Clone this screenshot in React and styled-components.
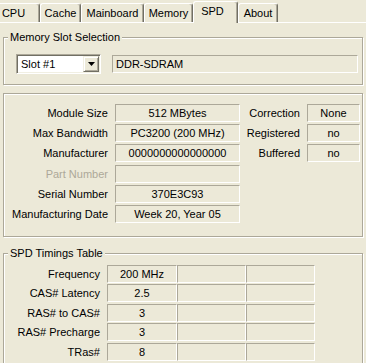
import React from "react";
import styled, { createGlobalStyle } from "styled-components";

const GlobalStyle = createGlobalStyle`
  html, body {
    margin: 0;
    padding: 0;
    background: #ece9d8;
  }
  body {
    font-family: "Liberation Sans", Arial, sans-serif;
    font-size: 11px;
    color: #000;
  }
`;

const Window = styled.div`
  width: 366px;
  height: 363px;
  overflow: hidden;
  background: #ece9d8;
`;

const TabStrip = styled.div`
  display: flex;
  align-items: flex-end;
  height: 22px;
  margin-left: -13px;
  position: relative;
  z-index: 1;
`;

const Tab = styled.div`
  box-sizing: border-box;
  width: ${(p) => p.$w}px;
  height: ${(p) => (p.$active ? 22 : 19)}px;
  margin-bottom: ${(p) => (p.$active ? -1 : 0)}px;
  padding-bottom: ${(p) => (p.$active ? 2 : 0)}px;
  padding-right: ${(p) => (p.$active ? 6 : 0)}px;
  border-left: 1px solid #fff;
  border-top: 1px solid #fff;
  border-right: 1px solid #716f64;
  box-shadow: inset -1px 0 0 #aca899;
  border-radius: 3px 3px 0 0;
  background: #ece9d8;
  display: flex;
  align-items: center;
  justify-content: center;
  line-height: 13px;
`;

const Panel = styled.div`
  border-top: 1px solid #fff;
  padding: 8px 3px 0 3px;
  display: flex;
  flex-direction: column;
`;

const GroupBox = styled.fieldset`
  margin: ${(p) => p.$mt || 0}px 0 0 0;
  padding: 0;
  min-width: 0;
  border: 1px solid #aca899;
  box-shadow: inset 1px 1px 0 #fff, 1px 1px 0 #fff;
`;

const Legend = styled.legend`
  margin-left: 4px;
  padding: 0 2px;
  line-height: 13px;
  background: #ece9d8;
`;

const SlotRow = styled.div`
  display: flex;
  align-items: center;
  gap: 11px;
  padding: 10px 4px 10px 12px;
`;

const Combo = styled.div`
  box-sizing: border-box;
  width: 85px;
  height: 20px;
  display: flex;
  align-items: center;
  justify-content: space-between;
  background: #fff;
  border: 1px solid;
  border-color: #aca899 #fff #fff #aca899;
  box-shadow: inset 1px 1px 0 #716f64, inset -1px -1px 0 #f1efe2;
  padding: 1px 1px 1px 4px;
`;

const DropButton = styled.div`
  box-sizing: border-box;
  width: 16px;
  height: 16px;
  display: flex;
  align-items: center;
  justify-content: center;
  background: #ece9d8;
  border: 1px solid;
  border-color: #f1efe2 #716f64 #716f64 #f1efe2;
  box-shadow: inset 1px 1px 0 #fff, inset -1px -1px 0 #aca899;
`;

const Field = styled.div`
  box-sizing: border-box;
  height: 18px;
  ${(p) => (p.$grow ? "flex: 1;" : "")}
  display: flex;
  align-items: center;
  justify-content: ${(p) => (p.$left ? "flex-start" : "center")};
  padding: 0 3px;
  border: 1px solid;
  border-color: #aca899 #fff #fff #aca899;
  white-space: nowrap;
  overflow: hidden;
`;

const InfoGrid = styled.div`
  display: grid;
  grid-template-columns: 100px 125px 53px 53px;
  grid-auto-rows: 18px;
  column-gap: 7px;
  row-gap: 2.2px;
  padding: 10px 2px 13px 4px;
`;

const Label = styled.div`
  display: flex;
  align-items: center;
  justify-content: flex-end;
  white-space: nowrap;
  color: ${(p) => (p.$disabled ? "#aca899" : "#000")};
`;

const TimingGrid = styled.div`
  display: grid;
  grid-template-columns: 99px 70px 69px 69px;
  grid-auto-rows: 18px;
  row-gap: 1.5px;
  padding: 5px 2px 20px 4px;
`;

const TimingLabel = styled(Label)`
  margin-right: 7px;
`;

const tabs = [
  { name: "CPU", w: 53 },
  { name: "Cache", w: 41 },
  { name: "Mainboard", w: 63 },
  { name: "Memory", w: 49 },
  { name: "SPD", w: 45, active: true },
  { name: "About", w: 40 },
];

const info = [
  ["Module Size", "512 MBytes", "Correction", "None"],
  ["Max Bandwidth", "PC3200 (200 MHz)", "Registered", "no"],
  ["Manufacturer", "0000000000000000", "Buffered", "no"],
  ["Part Number", "", null, null, true],
  ["Serial Number", "370E3C93", null, null],
  ["Manufacturing Date", "Week 20, Year 05", null, null],
];

const timings = [
  ["Frequency", "200 MHz"],
  ["CAS# Latency", "2.5"],
  ["RAS# to CAS#", "3"],
  ["RAS# Precharge", "3"],
  ["TRas#", "8"],
];

export default function App() {
  return (
    <Window>
      <GlobalStyle />
      <TabStrip>
        {tabs.map((t) => (
          <Tab key={t.name} $w={t.w} $active={t.active}>
            {t.name}
          </Tab>
        ))}
      </TabStrip>
      <Panel>
        <GroupBox>
          <Legend>Memory Slot Selection</Legend>
          <SlotRow>
            <Combo>
              <span>Slot #1</span>
              <DropButton>
                <svg width="7" height="4" viewBox="0 0 7 4">
                  <polygon points="0,0 7,0 3.5,4" fill="#000" />
                </svg>
              </DropButton>
            </Combo>
            <Field $grow $left>
              DDR-SDRAM
            </Field>
          </SlotRow>
        </GroupBox>

        <GroupBox $mt={8}>
          <InfoGrid>
            {info.map(([l, v, rl, rv, disabled]) => (
              <React.Fragment key={l}>
                <Label $disabled={disabled}>{l}</Label>
                <Field>{v}</Field>
                {rl ? <Label>{rl}</Label> : <div />}
                {rl ? <Field>{rv}</Field> : <div />}
              </React.Fragment>
            ))}
          </InfoGrid>
        </GroupBox>

        <GroupBox $mt={10}>
          <Legend>SPD Timings Table</Legend>
          <TimingGrid>
            {timings.map(([l, v]) => (
              <React.Fragment key={l}>
                <TimingLabel>{l}</TimingLabel>
                <Field>{v}</Field>
                <Field />
                <Field />
              </React.Fragment>
            ))}
          </TimingGrid>
        </GroupBox>
      </Panel>
    </Window>
  );
}
